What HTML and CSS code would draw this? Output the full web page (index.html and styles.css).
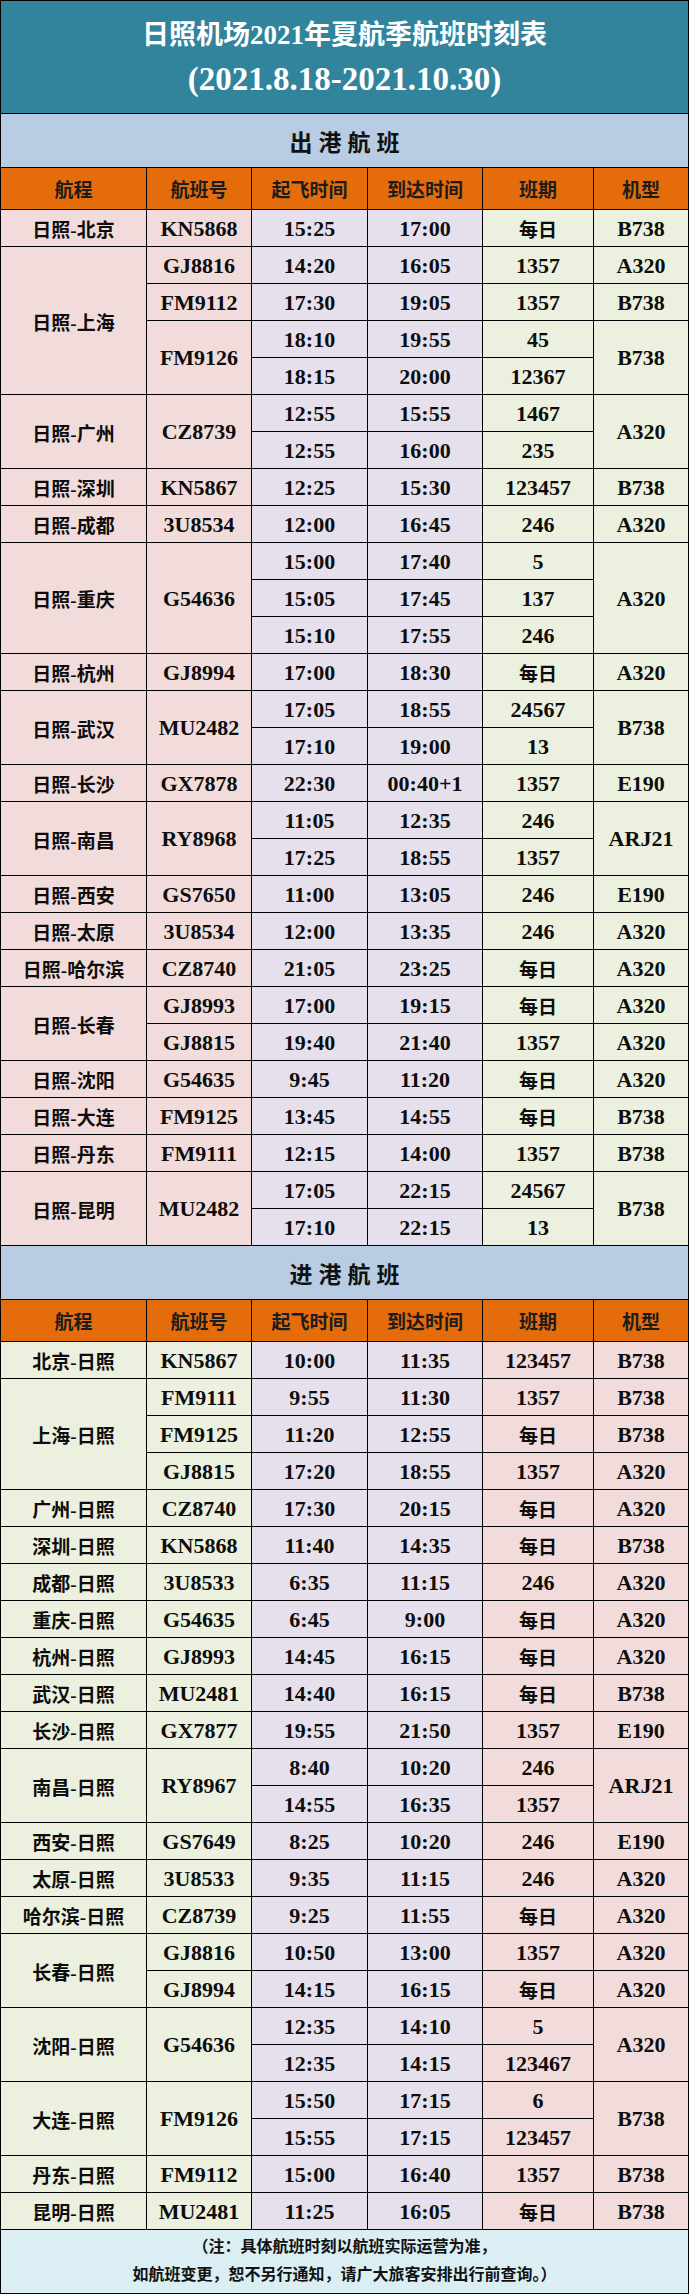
FILE: index.html
```html
<!DOCTYPE html>
<html lang="zh-CN">
<head>
<meta charset="utf-8">
<title>日照机场2021年夏航季航班时刻表</title>
<link rel="stylesheet" href="styles.css">
</head>
<body>
<div class="sheet">
  <header class="title">
    <div class="t1">日照机场2021年夏航季航班时刻表</div>
    <div class="t2">(2021.8.18-2021.10.30)</div>
  </header>

  <div class="section">出港航班</div>
  <div class="grid out">
    <div class="h">航程</div><div class="h">航班号</div><div class="h">起飞时间</div><div class="h">到达时间</div><div class="h">班期</div><div class="h">机型</div>

    <div class="c cn">日照-北京</div><div class="c">KN5868</div><div class="c">15:25</div><div class="c">17:00</div><div class="c cn">每日</div><div class="c">B738</div>

    <div class="c cn r4">日照-上海</div><div class="c">GJ8816</div><div class="c">14:20</div><div class="c">16:05</div><div class="c">1357</div><div class="c">A320</div>
    <div class="c">FM9112</div><div class="c">17:30</div><div class="c">19:05</div><div class="c">1357</div><div class="c">B738</div>
    <div class="c r2">FM9126</div><div class="c">18:10</div><div class="c">19:55</div><div class="c">45</div><div class="c r2">B738</div>
    <div class="c">18:15</div><div class="c">20:00</div><div class="c">12367</div>

    <div class="c cn r2">日照-广州</div><div class="c r2">CZ8739</div><div class="c">12:55</div><div class="c">15:55</div><div class="c">1467</div><div class="c r2">A320</div>
    <div class="c">12:55</div><div class="c">16:00</div><div class="c">235</div>

    <div class="c cn">日照-深圳</div><div class="c">KN5867</div><div class="c">12:25</div><div class="c">15:30</div><div class="c">123457</div><div class="c">B738</div>
    <div class="c cn">日照-成都</div><div class="c">3U8534</div><div class="c">12:00</div><div class="c">16:45</div><div class="c">246</div><div class="c">A320</div>

    <div class="c cn r3">日照-重庆</div><div class="c r3">G54636</div><div class="c">15:00</div><div class="c">17:40</div><div class="c">5</div><div class="c r3">A320</div>
    <div class="c">15:05</div><div class="c">17:45</div><div class="c">137</div>
    <div class="c">15:10</div><div class="c">17:55</div><div class="c">246</div>

    <div class="c cn">日照-杭州</div><div class="c">GJ8994</div><div class="c">17:00</div><div class="c">18:30</div><div class="c cn">每日</div><div class="c">A320</div>

    <div class="c cn r2">日照-武汉</div><div class="c r2">MU2482</div><div class="c">17:05</div><div class="c">18:55</div><div class="c">24567</div><div class="c r2">B738</div>
    <div class="c">17:10</div><div class="c">19:00</div><div class="c">13</div>

    <div class="c cn">日照-长沙</div><div class="c">GX7878</div><div class="c">22:30</div><div class="c">00:40+1</div><div class="c">1357</div><div class="c">E190</div>

    <div class="c cn r2">日照-南昌</div><div class="c r2">RY8968</div><div class="c">11:05</div><div class="c">12:35</div><div class="c">246</div><div class="c r2">ARJ21</div>
    <div class="c">17:25</div><div class="c">18:55</div><div class="c">1357</div>

    <div class="c cn">日照-西安</div><div class="c">GS7650</div><div class="c">11:00</div><div class="c">13:05</div><div class="c">246</div><div class="c">E190</div>
    <div class="c cn">日照-太原</div><div class="c">3U8534</div><div class="c">12:00</div><div class="c">13:35</div><div class="c">246</div><div class="c">A320</div>
    <div class="c cn">日照-哈尔滨</div><div class="c">CZ8740</div><div class="c">21:05</div><div class="c">23:25</div><div class="c cn">每日</div><div class="c">A320</div>

    <div class="c cn r2">日照-长春</div><div class="c">GJ8993</div><div class="c">17:00</div><div class="c">19:15</div><div class="c cn">每日</div><div class="c">A320</div>
    <div class="c">GJ8815</div><div class="c">19:40</div><div class="c">21:40</div><div class="c">1357</div><div class="c">A320</div>

    <div class="c cn">日照-沈阳</div><div class="c">G54635</div><div class="c">9:45</div><div class="c">11:20</div><div class="c cn">每日</div><div class="c">A320</div>
    <div class="c cn">日照-大连</div><div class="c">FM9125</div><div class="c">13:45</div><div class="c">14:55</div><div class="c cn">每日</div><div class="c">B738</div>
    <div class="c cn">日照-丹东</div><div class="c">FM9111</div><div class="c">12:15</div><div class="c">14:00</div><div class="c">1357</div><div class="c">B738</div>

    <div class="c cn r2">日照-昆明</div><div class="c r2">MU2482</div><div class="c">17:05</div><div class="c">22:15</div><div class="c">24567</div><div class="c r2">B738</div>
    <div class="c">17:10</div><div class="c">22:15</div><div class="c">13</div>
  </div>

  <div class="section">进港航班</div>
  <div class="grid in">
    <div class="h">航程</div><div class="h">航班号</div><div class="h">起飞时间</div><div class="h">到达时间</div><div class="h">班期</div><div class="h">机型</div>

    <div class="c cn">北京-日照</div><div class="c">KN5867</div><div class="c">10:00</div><div class="c">11:35</div><div class="c">123457</div><div class="c">B738</div>

    <div class="c cn r3">上海-日照</div><div class="c">FM9111</div><div class="c">9:55</div><div class="c">11:30</div><div class="c">1357</div><div class="c">B738</div>
    <div class="c">FM9125</div><div class="c">11:20</div><div class="c">12:55</div><div class="c cn">每日</div><div class="c">B738</div>
    <div class="c">GJ8815</div><div class="c">17:20</div><div class="c">18:55</div><div class="c">1357</div><div class="c">A320</div>

    <div class="c cn">广州-日照</div><div class="c">CZ8740</div><div class="c">17:30</div><div class="c">20:15</div><div class="c cn">每日</div><div class="c">A320</div>
    <div class="c cn">深圳-日照</div><div class="c">KN5868</div><div class="c">11:40</div><div class="c">14:35</div><div class="c cn">每日</div><div class="c">B738</div>
    <div class="c cn">成都-日照</div><div class="c">3U8533</div><div class="c">6:35</div><div class="c">11:15</div><div class="c">246</div><div class="c">A320</div>
    <div class="c cn">重庆-日照</div><div class="c">G54635</div><div class="c">6:45</div><div class="c">9:00</div><div class="c cn">每日</div><div class="c">A320</div>
    <div class="c cn">杭州-日照</div><div class="c">GJ8993</div><div class="c">14:45</div><div class="c">16:15</div><div class="c cn">每日</div><div class="c">A320</div>
    <div class="c cn">武汉-日照</div><div class="c">MU2481</div><div class="c">14:40</div><div class="c">16:15</div><div class="c cn">每日</div><div class="c">B738</div>
    <div class="c cn">长沙-日照</div><div class="c">GX7877</div><div class="c">19:55</div><div class="c">21:50</div><div class="c">1357</div><div class="c">E190</div>

    <div class="c cn r2">南昌-日照</div><div class="c r2">RY8967</div><div class="c">8:40</div><div class="c">10:20</div><div class="c">246</div><div class="c r2">ARJ21</div>
    <div class="c">14:55</div><div class="c">16:35</div><div class="c">1357</div>

    <div class="c cn">西安-日照</div><div class="c">GS7649</div><div class="c">8:25</div><div class="c">10:20</div><div class="c">246</div><div class="c">E190</div>
    <div class="c cn">太原-日照</div><div class="c">3U8533</div><div class="c">9:35</div><div class="c">11:15</div><div class="c">246</div><div class="c">A320</div>
    <div class="c cn">哈尔滨-日照</div><div class="c">CZ8739</div><div class="c">9:25</div><div class="c">11:55</div><div class="c cn">每日</div><div class="c">A320</div>

    <div class="c cn r2">长春-日照</div><div class="c">GJ8816</div><div class="c">10:50</div><div class="c">13:00</div><div class="c">1357</div><div class="c">A320</div>
    <div class="c">GJ8994</div><div class="c">14:15</div><div class="c">16:15</div><div class="c cn">每日</div><div class="c">A320</div>

    <div class="c cn r2">沈阳-日照</div><div class="c r2">G54636</div><div class="c">12:35</div><div class="c">14:10</div><div class="c">5</div><div class="c r2">A320</div>
    <div class="c">12:35</div><div class="c">14:15</div><div class="c">123467</div>

    <div class="c cn r2">大连-日照</div><div class="c r2">FM9126</div><div class="c">15:50</div><div class="c">17:15</div><div class="c">6</div><div class="c r2">B738</div>
    <div class="c">15:55</div><div class="c">17:15</div><div class="c">123457</div>

    <div class="c cn">丹东-日照</div><div class="c">FM9112</div><div class="c">15:00</div><div class="c">16:40</div><div class="c">1357</div><div class="c">B738</div>
    <div class="c cn">昆明-日照</div><div class="c">MU2481</div><div class="c">11:25</div><div class="c">16:05</div><div class="c cn">每日</div><div class="c">B738</div>
  </div>

  <footer class="note">
    <div>（注：具体航班时刻以航班实际运营为准，</div>
    <div>如航班变更，恕不另行通知，请广大旅客安排出行前查询。）</div>
  </footer>
</div>
</body>
</html>
```

FILE: styles.css
```css
* { box-sizing: border-box; }

html, body {
  margin: 0;
  padding: 0;
  background: #ffffff;
}

body {
  width: 689px;
  font-family: "Liberation Serif", "Noto Sans CJK SC", serif;
  font-weight: 700;
  color: #111;
}

.sheet {
  width: 689px;
  border-top: 1px solid #000;
  border-left: 1px solid #000;
}

.title {
  height: 113px;
  background: #31849b;
  color: #ffffff;
  border-bottom: 1px solid #000;
  border-right: 1px solid #000;
  display: flex;
  flex-direction: column;
  align-items: center;
  padding-top: 14px;
  gap: 4px;
}

.t1 {
  font-size: 27px;
  line-height: 40px;
  height: 40px;
}

.t2 {
  font-size: 33px;
  line-height: 40px;
  height: 40px;
}

.section {
  height: 54px;
  background: #b8cce4;
  border-bottom: 1px solid #000;
  border-right: 1px solid #000;
  display: flex;
  align-items: center;
  justify-content: center;
  font-family: "Noto Sans CJK SC", sans-serif;
  font-size: 23px;
  letter-spacing: 6px;
  padding-left: 6px;
  color: #111;
}

.grid {
  display: grid;
  grid-template-columns: 146px 105px 116px 115px 111px 95px;
  grid-template-rows: 42px;
  grid-auto-rows: 37px;
}

.grid.out {
  background: linear-gradient(to right, #f2dcdb 0 251px, #e5e0ec 251px 482px, #ebf1de 482px);
}

.grid.in {
  background: linear-gradient(to right, #ebf1de 0 251px, #e5e0ec 251px 482px, #f2dcdb 482px);
}

.h, .c {
  display: flex;
  align-items: center;
  justify-content: center;
  border-bottom: 1px solid #000;
  border-right: 1px solid #000;
  white-space: nowrap;
}

.h {
  background: #e46c0a;
  font-family: "Noto Sans CJK SC", sans-serif;
  font-size: 19px;
  color: #1c1c1c;
}

.c {
  font-size: 22px;
  color: #0d0d0d;
  padding-top: 1px;
}

.c.cn {
  font-size: 19px;
}

.r2 { grid-row: span 2; }
.r3 { grid-row: span 3; }
.r4 { grid-row: span 4; }

.note {
  height: 64px;
  background: #daeef3;
  border-right: 1px solid #000;
  border-bottom: 1px solid #000;
  display: flex;
  flex-direction: column;
  align-items: center;
  padding-top: 1px;
  font-family: "Noto Sans CJK SC", sans-serif;
  font-size: 16px;
  line-height: 28px;
  color: #111;
}
```
